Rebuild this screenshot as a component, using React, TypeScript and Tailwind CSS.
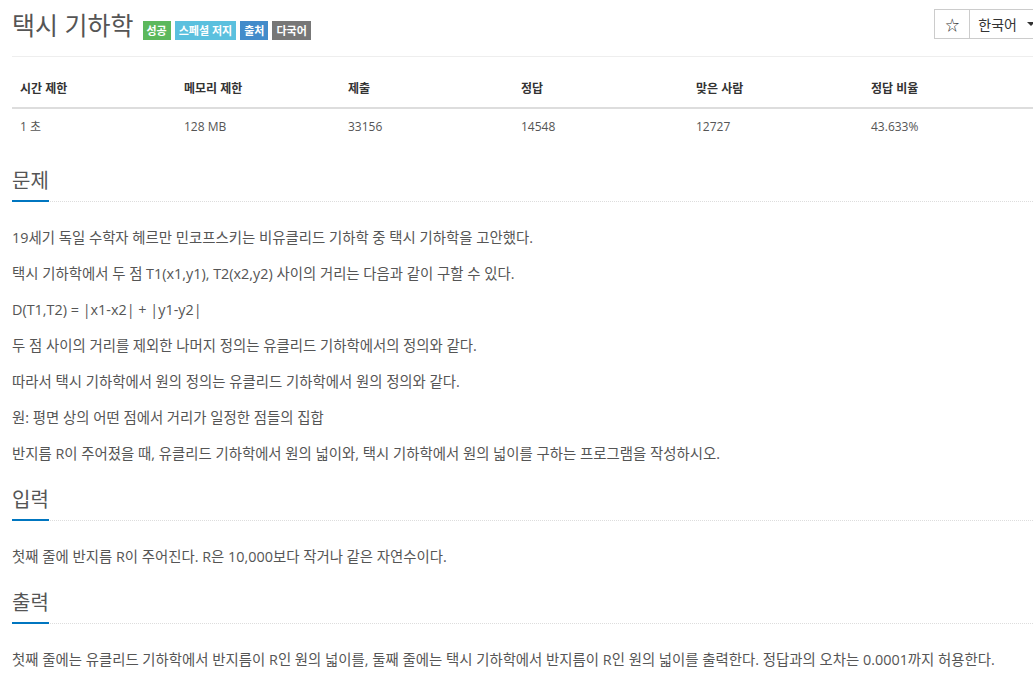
import React from 'react'

const font = "font-['Open_Sans','Noto_Sans_CJK_KR',sans-serif]"

function SectionTitle({ children }: { children: React.ReactNode }) {
  return (
    <div className="border-b border-dotted border-[#ddd]">
      <span className="inline-block -mb-px border-b-2 border-[#0076c0] pb-[5px] text-[20px] leading-[28px] text-[#555]">
        {children}
      </span>
    </div>
  )
}

const stats = [
  ['시간 제한', '1 초'],
  ['메모리 제한', '128 MB'],
  ['제출', '33156'],
  ['정답', '14548'],
  ['맞은 사람', '12727'],
  ['정답 비율', '43.633%'],
]

const problem = [
  '19세기 독일 수학자 헤르만 민코프스키는 비유클리드 기하학 중 택시 기하학을 고안했다.',
  '택시 기하학에서 두 점 T1(x1,y1), T2(x2,y2) 사이의 거리는 다음과 같이 구할 수 있다.',
  'D(T1,T2) = |x1-x2| + |y1-y2|',
  '두 점 사이의 거리를 제외한 나머지 정의는 유클리드 기하학에서의 정의와 같다.',
  '따라서 택시 기하학에서 원의 정의는 유클리드 기하학에서 원의 정의와 같다.',
  '원: 평면 상의 어떤 점에서 거리가 일정한 점들의 집합',
  '반지름 R이 주어졌을 때, 유클리드 기하학에서 원의 넓이와, 택시 기하학에서 원의 넓이를 구하는 프로그램을 작성하시오.',
]

export default function App() {
  return (
    <div className={`h-[677px] w-[1033px] overflow-hidden bg-white text-[14.4px] text-[#555] ${font}`}>
      <div className="ml-3 w-[1033px]">
        {/* title */}
        <div className="flex h-[57px] items-start justify-between border-b border-[#eee] pt-[9px]">
          <div className="flex items-end">
            <h1 className="text-[25px] leading-[32px] text-[#555]">택시 기하학</h1>
            <div className="mb-[1px] ml-[9px] flex gap-[4px] text-[11px] font-bold leading-[19px] text-white">
              <span className="bg-[#5cb85c] px-[4px]">성공</span>
              <span className="bg-[#5bc0de] px-[4px]">스페셜 저지</span>
              <span className="bg-[#428bca] px-[4px]">출처</span>
              <span className="bg-[#777] px-[4px]">다국어</span>
            </div>
          </div>
          <div className="mr-[-1px] flex h-[30px] border border-[#ccc] text-[14px] text-[#333]">
            <div className="flex w-[35px] items-center justify-center border-r border-[#ccc]">☆</div>
            <div className="flex items-center gap-[10px] pl-[8px] pr-[10px]">
              <span>한국어</span>
              <span className="border-x-[4px] border-t-[4px] border-x-transparent border-t-[#333]" />
            </div>
          </div>
        </div>

        {/* stats table */}
        <div className="mt-[14px] grid grid-cols-[164px_164px_173px_175px_175px_1fr] text-[12px]">
          {stats.map(([h]) => (
            <div key={h} className="border-b-2 border-[#ddd] px-[8px] py-[8px] font-bold leading-[20px] text-[#333]">
              {h}
            </div>
          ))}
          {stats.map(([h, v]) => (
            <div key={h + v} className="px-[8px] py-[8px] leading-[20px] text-[#555]">
              {v}
            </div>
          ))}
        </div>

        {/* sections */}
        <div className="mt-[22px] flex flex-col gap-[22px]">
          <section>
            <SectionTitle>문제</SectionTitle>
            <div className="mt-[26px] flex flex-col gap-[16px] leading-[20px]">
              {problem.map((p) => (
                <p key={p}>{p}</p>
              ))}
            </div>
          </section>
          <section>
            <SectionTitle>입력</SectionTitle>
            <p className="mt-[26px] leading-[20px]">첫째 줄에 반지름 R이 주어진다. R은 10,000보다 작거나 같은 자연수이다.</p>
          </section>
          <section>
            <SectionTitle>출력</SectionTitle>
            <p className="mt-[26px] leading-[20px]">
              첫째 줄에는 유클리드 기하학에서 반지름이 R인 원의 넓이를, 둘째 줄에는 택시 기하학에서 반지름이 R인 원의 넓이를 출력한다. 정답과의 오차는 0.0001까지 허용한다.
            </p>
          </section>
        </div>
      </div>
    </div>
  )
}
